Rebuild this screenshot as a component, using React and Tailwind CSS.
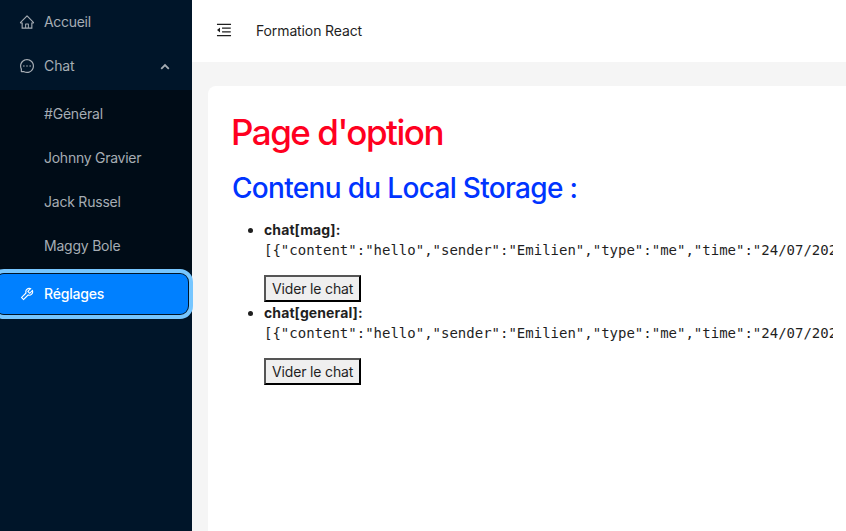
import {
  AiOutlineHome,
  AiOutlineMessage,
  AiOutlineTool,
  AiOutlineMenuFold,
} from "react-icons/ai";

const contacts = [
  { name: "#Général", spacing: "tracking-[-0.2px]" },
  { name: "Johnny Gravier", spacing: "tracking-[-0.26px]" },
  { name: "Jack Russel", spacing: "tracking-[-0.22px]" },
  { name: "Maggy Bole", spacing: "tracking-[-0.22px]" },
];

const chats = [{ key: "chat[mag]:" }, { key: "chat[general]:" }];

const content =
  '[{"content":"hello","sender":"Emilien","type":"me","time":"24/07/202';

function Sidebar() {
  return (
    <aside className="w-48 shrink-0 bg-[#001529] text-[#a6adb4]">
      <div className="mt-0.5 flex h-10 items-center pl-5">
        <AiOutlineHome className="-ml-px size-4" />
        <span className="ml-[9px] tracking-[-0.3px]">Accueil</span>
      </div>
      <div className="mt-1 flex h-10 items-center pr-[22px] pl-5">
        <AiOutlineMessage className="-ml-px size-4" />
        <span className="ml-[9px] flex-1 tracking-[-0.1px]">Chat</span>
        <svg viewBox="0 0 10 8" className="h-2 w-2.5" fill="none" stroke="currentColor" strokeWidth="1.8">
          <path d="M1.2 6.8 5 3 8.8 6.8" />
        </svg>
      </div>
      <div className="mt-1 flex flex-col gap-1 bg-[#000c17] py-1">
        {contacts.map((c) => (
          <div key={c.name} className={`flex h-10 items-center pl-11 ${c.spacing}`}>
            {c.name}
          </div>
        ))}
      </div>
      <div className="relative mt-1 mr-1 -ml-1 flex h-10 items-center rounded-lg bg-[#0080ff] pl-6 text-white outline-4 outline-offset-1 outline-[#76c6ff]">
        <AiOutlineTool className="-ml-px size-4" />
        <span className="ml-[9px] font-[450] tracking-[-0.2px]">Réglages</span>
      </div>
    </aside>
  );
}

export default function App() {
  return (
    <div className="flex h-[531px] w-[846px] overflow-hidden bg-[#f5f5f5] font-['Inter','Liberation_Sans',sans-serif] text-sm text-[#1f1f1f]">
      <Sidebar />
      <div className="flex min-w-0 flex-1 flex-col">
        <header className="flex h-[62px] shrink-0 items-center bg-white pl-[23px]">
          <AiOutlineMenuFold className="size-[18px] -translate-y-px" />
          <span className="ml-[23px] tracking-[-0.12px]">Formation React</span>
        </header>
        <main className="mt-6 ml-4 flex-1 rounded-tl-lg bg-white pt-6 pl-6">
          <h1 className="-ml-px text-[35px] leading-[44px] font-[550] tracking-[-1.5px] text-[#ff0020]">
            Page d'option
          </h1>
          <h2 className="mt-3 text-[28px] leading-[44px] font-[530] tracking-[-0.68px] text-[#0034ff]">
            Contenu du Local Storage :
          </h2>
          <ul className="mt-2.5 list-disc pl-8">
            {chats.map((c) => (
              <li key={c.key} className="h-[83px]">
                <strong className="block leading-5 font-bold tracking-[0.1px]">{c.key}</strong>
                <pre className="w-[569px] overflow-hidden font-['DejaVu_Sans_Mono',monospace] text-sm leading-5">
                  {content}
                </pre>
                <button className="mt-[15px] h-[27px] border-2 border-[#000] border-t-[#555] border-l-[#555] bg-[#efefef] px-1.5 leading-[22px] tracking-[-0.16px]">
                  Vider le chat
                </button>
              </li>
            ))}
          </ul>
        </main>
      </div>
    </div>
  );
}
